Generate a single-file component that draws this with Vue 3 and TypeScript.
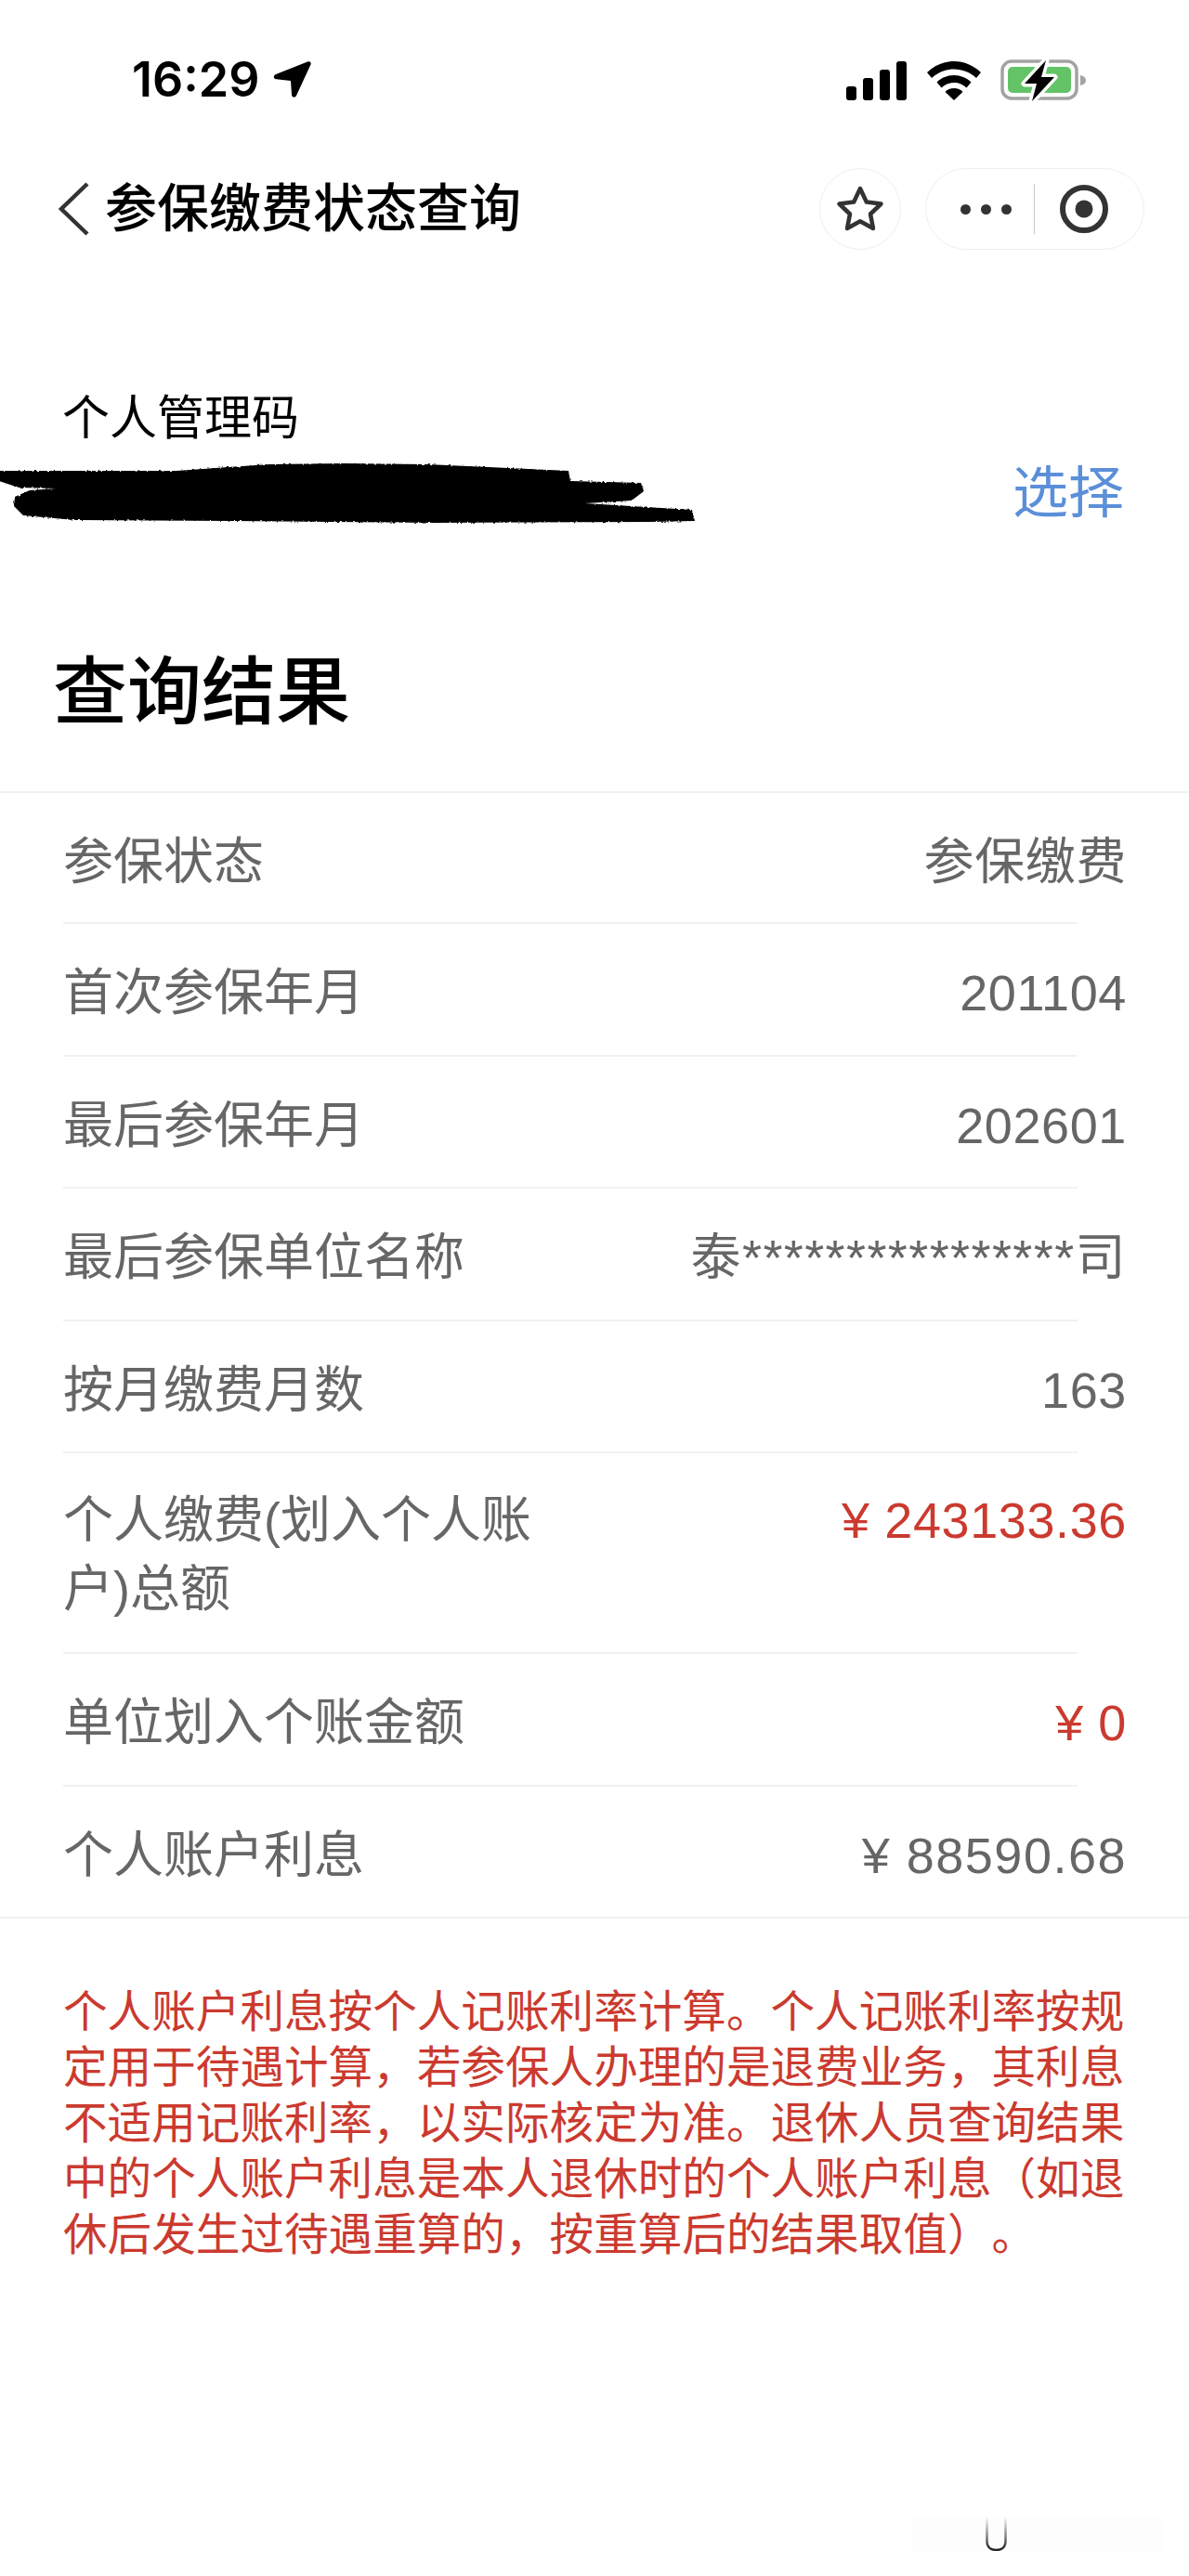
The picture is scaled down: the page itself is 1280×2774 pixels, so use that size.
<template>
  <div class="page">
    <!-- 状态栏 -->
    <div class="status-bar">
      <div class="status-left">
        <span class="time">16:29</span>
        <svg class="arrow" width="42" height="42" viewBox="0 0 42 42">
          <path d="M37 1.500 3 15c-3 1.300-3 5 .5 5.200L19 22l1 15c.2 3 3.800 3.800 5 1L40.500 4.500C41.500 2 39.500.5 37 1.500Z" fill="#000" />
        </svg>
      </div>
      <div class="status-right">
        <svg width="66" height="42" viewBox="0 0 66 42">
          <rect x="0" y="27" width="11" height="15" rx="3" fill="#000" />
          <rect x="18" y="18" width="11" height="24" rx="3" fill="#000" />
          <rect x="36" y="9" width="11" height="33" rx="3" fill="#000" />
          <rect x="54" y="0" width="11" height="42" rx="3" fill="#000" />
        </svg>
        <svg width="58" height="42" viewBox="0 0 58 42">
          <path d="M29 0C18 0 8 4.500 0 12l5 6c6.500-6 15-9.500 24-9.500S46.500 12 53 18l5-6C50 4.500 40 0 29 0Z" fill="#000" />
          <path d="M29 15c-7 0-13.500 2.800-18.500 7.500l5 6c3.500-3.500 8.300-5.500 13.500-5.500s10 2 13.500 5.500l5-6C42.500 17.800 36 15 29 15Z" fill="#000" />
          <path d="M29 29c-3.800 0-7.200 1.500-9.500 4L29 42l9.500-9C36.200 30.500 32.800 29 29 29Z" fill="#000" />
        </svg>
        <svg width="94" height="46" viewBox="0 0 94 46">
          <rect x="2" y="2" width="80" height="40" rx="10" fill="none" stroke="#a3a3a3" stroke-width="3.500" />
          <rect x="8" y="8" width="68" height="28" rx="5" fill="#62c466" />
          <path d="M86 17c4 .8 6 3 6 5.500S90 27.200 86 28Z" fill="#a3a3a3" />
          <path d="M49 1 26 26h13l-5 19 24-26H44Z" fill="#000" stroke="#fff" stroke-width="7" stroke-linejoin="round" paint-order="stroke" />
        </svg>
      </div>
    </div>

    <!-- 小程序导航 -->
    <div class="nav">
      <svg class="back" width="36" height="58" viewBox="0 0 36 58">
        <path d="M33 2 5 29l28 27" fill="none" stroke="#333" stroke-width="4.500" />
      </svg>
      <span class="nav-title">参保缴费状态查询</span>
      <div class="nav-star">
        <svg width="54" height="52" viewBox="0 0 54 52">
          <path d="M27 4l6.800 14.500 15.700 2-11.500 11 3 15.500L27 39.300 13 47l3-15.500-11.500-11 15.700-2Z" fill="none" stroke="#333" stroke-width="4.500" stroke-linejoin="round" />
        </svg>
      </div>
      <div class="capsule">
        <div class="dots">
          <i></i><i></i><i></i>
        </div>
        <div class="capsule-line"></div>
        <svg width="54" height="54" viewBox="0 0 54 54">
          <circle cx="27" cy="27" r="23" fill="none" stroke="#333" stroke-width="6" />
          <circle cx="27" cy="27" r="9.500" fill="#333" />
        </svg>
      </div>
    </div>

    <!-- 个人管理码 -->
    <div class="code-label">个人管理码</div>
    <div class="code-row">
      <svg class="scribble" width="750" height="66" viewBox="0 0 750 66">
        <defs>
          <filter id="rough" x="-2%" y="-10%" width="104%" height="120%">
            <feTurbulence type="fractalNoise" baseFrequency="0.35" numOctaves="2" seed="4" />
            <feDisplacementMap in="SourceGraphic" scale="3" />
            <feGaussianBlur stdDeviation="0.6" />
          </filter>
        </defs>
        <path d="M-4 8 190 8 290 1 370 0 460 1 612 8 614 19 690 21 693 30 680 40 630 43 745 50 748 62 700 63 470 64 250 62 80 61 25 56 15 46 16 36 32 29 60 27 20 26-4 18Z" fill="#000" filter="url(#rough)" />
      </svg>
      <span class="select">选择</span>
    </div>

    <div class="section-title">查询结果</div>

    <!-- 结果列表 -->
    <div class="list">
      <template v-for="(item, i) in rows" :key="i">
        <div class="row" :class="{ first: i === 0, tall: item.tall }">
          <span class="row-label">{{ item.label }}</span>
          <span class="row-value" :class="{ red: item.red, mask: item.mask, wide: item.wide }">{{ item.value }}</span>
        </div>
        <div v-if="i < rows.length - 1" class="row-line"></div>
      </template>
    </div>

    <div class="note">
      个人账户利息按个人记账利率计算。个人记账利率按规定用于待遇计算，若参保人办理的是退费业务，其利息不适用记账利率，以实际核定为准。退休人员查询结果中的个人账户利息是本人退休时的个人账户利息（如退休后发生过待遇重算的，按重算后的结果取值）。
    </div>

    <!-- 底部残留的横条 -->
    <div class="home-band">
      <svg width="25" height="37" viewBox="0 0 25 37">
        <defs>
          <linearGradient id="fade" x1="0" y1="0" x2="0" y2="1">
            <stop offset="0" stop-color="#333" stop-opacity="0" />
            <stop offset="1" stop-color="#222" />
          </linearGradient>
        </defs>
        <path d="M2.500 0V27C2.500 33 7 36 12.500 36S22.500 33 22.500 27V0" fill="none" stroke="url(#fade)" stroke-width="2.500" />
      </svg>
    </div>
  </div>
</template>

<script setup lang="ts">
interface Irow {
  label: string;
  value: string;
  red?: boolean;
  tall?: boolean;
  mask?: boolean;
  wide?: boolean;
}

const rows: Array<Irow> = [
  { label: '参保状态', value: '参保缴费' },
  { label: '首次参保年月', value: '201104' },
  { label: '最后参保年月', value: '202601' },
  { label: '最后参保单位名称', value: '泰****************司', mask: true },
  { label: '按月缴费月数', value: '163' },
  { label: '个人缴费(划入个人账户)总额', value: '¥ 243133.36', red: true, tall: true },
  { label: '单位划入个账金额', value: '¥ 0', red: true },
  { label: '个人账户利息', value: '¥ 88590.68', wide: true },
]
</script>

<style>
html,
body {
  margin: 0;
  background: #ffffff;
}
</style>

<style scoped>
.page {
  width: 1280px;
  height: 2774px;
  overflow: hidden;
  background: #ffffff;
  font-family: "Liberation Sans", "Noto Sans CJK SC", sans-serif;
  color: #000000;
}
.status-bar {
  height: 181px;
  box-sizing: border-box;
  padding: 64px 109px 0 142px;
  display: flex;
  justify-content: space-between;
  align-items: flex-start;
}
.status-left {
  display: flex;
  align-items: center;
  height: 44px;
}
.time {
  font-family: Inter, sans-serif;
  font-size: 52px;
  font-weight: 600;
  line-height: 44px;
}
.arrow {
  margin-left: 14px;
}
.status-right {
  display: flex;
  align-items: center;
  gap: 21px;
}
.nav {
  height: 88px;
  display: flex;
  align-items: center;
  padding-left: 61px;
}
.back {
  margin-right: 16px;
}
.nav-title {
  font-size: 56px;
  font-weight: 500;
  line-height: 88px;
  width: 769px;
}
.nav-star {
  width: 88px;
  height: 88px;
  box-sizing: border-box;
  border: 1px solid #eeeeee;
  border-radius: 50%;
  display: flex;
  align-items: center;
  justify-content: center;
}
.capsule {
  width: 236px;
  height: 88px;
  margin-left: 26px;
  box-sizing: border-box;
  border: 1px solid #eeeeee;
  border-radius: 44px;
  display: flex;
  align-items: center;
  padding-left: 37px;
}
.dots {
  display: flex;
  gap: 11px;
}
.dots i {
  width: 11px;
  height: 11px;
  border-radius: 50%;
  background: #333333;
}
.capsule-line {
  width: 1px;
  height: 54px;
  background: #c8c8c8;
  margin: 0 26px 0 24px;
}
.code-label {
  margin: 152px 0 0 67px;
  font-size: 51px;
  line-height: 60px;
}
.code-row {
  height: 80px;
  margin-top: 11px;
  padding-right: 70px;
  display: flex;
  justify-content: space-between;
  align-items: center;
}
.select {
  font-size: 60px;
  line-height: 76px;
  color: #5b8fd9;
}
.section-title {
  margin: 124px 0 0 57px;
  font-size: 80px;
  font-weight: 500;
  line-height: 100px;
}
.list {
  margin-top: 56px;
  border-top: 2px solid #f1f1f1;
  border-bottom: 2px solid #f1f1f1;
  padding-left: 68px;
}
.row {
  width: 1145px;
  height: 140.5px;
  box-sizing: border-box;
  padding-top: 8px;
  display: flex;
  justify-content: space-between;
  align-items: center;
  font-size: 54px;
  color: #666666;
}
.row.first {
  height: 139px;
}
.row.tall {
  height: 214px;
  align-items: flex-start;
  padding-top: 35px;
}
.row-label {
  width: 540px;
  line-height: 74px;
}
.row-value {
  text-align: right;
  white-space: nowrap;
  line-height: 74px;
  letter-spacing: 0.6px;
}
.row-value.mask {
  letter-spacing: 1.4px;
}
.row-value.wide {
  letter-spacing: 1.5px;
}
.row-value.red {
  color: #cb3a2f;
}
.row-line {
  width: 1092px;
  height: 2px;
  background: #f1f1f1;
}
.note {
  margin: 71px 60px 0 68px;
  font-size: 47.6px;
  line-height: 60px;
  color: #cb3a2f;
  text-spacing-trim: space-all;
}
.home-band {
  width: 270px;
  height: 37px;
  margin: 273px 0 0 982px;
  padding-left: 78px;
  box-sizing: border-box;
  background: #fdfdfd;
}
</style>
